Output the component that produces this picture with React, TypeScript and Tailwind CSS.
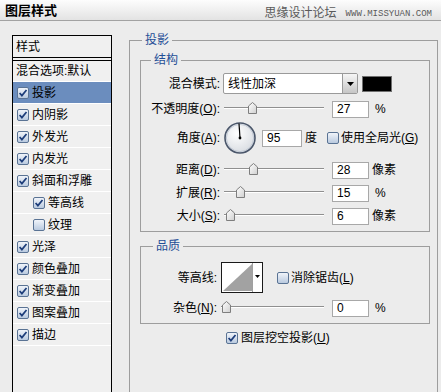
import clsx from "clsx";

const fieldBorder = "border border-[#9d9d9d]";
const legendStyle = "px-[3px] leading-[16px] text-[#1f4e96]";

function CheckBox({ checked }: { checked: boolean }) {
  return (
    <svg width="12" height="12" viewBox="0 0 12 12" className="shrink-0">
      <defs>
        <linearGradient id="cbFill" x1="0" y1="0" x2="0" y2="1">
          <stop offset="0" stopColor="#f3f6fb" />
          <stop offset="1" stopColor="#b7c8de" />
        </linearGradient>
      </defs>
      <rect x="0.5" y="0.5" width="11" height="11" rx="1.5" fill="url(#cbFill)" stroke="#5a7394" />
      {checked && (
        <path d="M2.6 6 L4.9 8.6 L9.5 3" fill="none" stroke="#1d3d7a" strokeWidth="1.7" />
      )}
    </svg>
  );
}

function Slider({ track, thumb }: { track: string; thumb: string }) {
  return (
    <div className={clsx("relative h-[12px] shrink-0 -mt-[3px]", track)}>
      {/* track */}
      <div className="mt-[5px] h-[2px] border-t border-[#8f8f8f] bg-white" />
      {/* thumb */}
      <svg width="9" height="12" viewBox="0 0 9 12" className={clsx("absolute top-0", thumb)}>
        <defs>
          <linearGradient id="thumbFill" x1="0" y1="0" x2="1" y2="1">
            <stop offset="0" stopColor="#ffffff" />
            <stop offset="1" stopColor="#cfcfcf" />
          </linearGradient>
        </defs>
        <path d="M0.5 4 L4.5 0.5 L8.5 4 L8.5 11.5 L0.5 11.5 Z" fill="url(#thumbFill)" stroke="#7e7e7e" />
      </svg>
    </div>
  );
}

function NumBox({ value, width = "w-[37px]" }: { value: string; width?: string }) {
  return (
    <div
      className={clsx(
        "h-[17px] shrink-0 bg-white border border-[#a8a8a8] pl-[4px] flex items-center leading-none",
        width,
      )}
    >
      {value}
    </div>
  );
}

function Key({ text, k }: { text: string; k: string }) {
  return (
    <>
      {text}(<span className="underline">{k}</span>):
    </>
  );
}

const listItems = [
  { label: "内阴影", checked: true },
  { label: "外发光", checked: true },
  { label: "内发光", checked: true },
  { label: "斜面和浮雕", checked: true },
  { label: "等高线", checked: true, sub: true },
  { label: "纹理", checked: false, sub: true },
  { label: "光泽", checked: true },
  { label: "颜色叠加", checked: true },
  { label: "渐变叠加", checked: true },
  { label: "图案叠加", checked: true },
  { label: "描边", checked: true },
];

export default function App() {
  return (
    <div className="w-[441px] h-[392px] overflow-hidden bg-[#ececec] text-[12px] text-black font-['Liberation_Sans','Noto_Sans_CJK_SC',sans-serif]">
      {/* Title bar */}
      <div className="h-[21px] border-b border-[#a2a2a2] bg-gradient-to-b from-[#fdfdfd] to-[#e3e3e3] flex items-end justify-between">
        <div className="pl-[5px] pb-[3px] font-bold text-[13px] leading-[13px]">图层样式</div>
        <div className="flex items-end pr-[9px] text-[#5a5a5a]">
          <span className="text-[12px] leading-[13px]">思缘设计论坛</span>
          <span className="ml-[9px] pb-[1px] text-[9px] leading-[9px] font-['Liberation_Mono',monospace]">
            WWW.MISSYUAN.COM
          </span>
        </div>
      </div>

      <div className="flex items-start">
        {/* Style list */}
        <div className="ml-[12px] mt-[14px] w-[100px] h-[380px] shrink-0 border border-black bg-[#f0f0f0]">
          <div className="h-[25px] border-b-4 border-double border-black pl-[3px] flex items-center">样式</div>
          <div className="h-[21px] border-b border-white pl-[3px] flex items-center">混合选项:默认</div>
          <div className="h-[22px] border-b border-white bg-[#6b8dbe] pl-[4px] flex items-center gap-[3px]">
            <CheckBox checked />
            <span>投影</span>
          </div>
          {listItems.map((item) => (
            <div
              key={item.label}
              className={clsx(
                "h-[22px] border-b border-white flex items-center gap-[3px]",
                item.sub ? "pl-[20px]" : "pl-[4px]",
              )}
            >
              <CheckBox checked={item.checked} />
              <span>{item.label}</span>
            </div>
          ))}
        </div>

        {/* Drop shadow panel */}
        <fieldset className={clsx("ml-[17px] mt-[11px] w-[309px] h-[400px] shrink-0", fieldBorder)}>
          <legend className={clsx("ml-[12px]", legendStyle)}>投影</legend>

          {/* Structure */}
          <fieldset className={clsx("ml-[10px] mt-[4px] w-[290px] pb-[6px]", fieldBorder)}>
            <legend className={clsx("ml-[10px]", legendStyle)}>结构</legend>

            <div className="mt-[5px] h-[21px] flex items-center">
              <div className="w-[79px] text-right">混合模式:</div>
              <div className="ml-[3px] w-[135px] h-[21px] bg-white border border-[#9a9a9a] rounded-[2px] flex items-center overflow-hidden">
                <span className="pl-[4px] flex-1">线性加深</span>
                <div className="w-[15px] h-full border-l border-[#9a9a9a] bg-gradient-to-b from-[#f6f6f6] to-[#c6c6c6] flex items-center justify-center">
                  <svg width="7" height="4" viewBox="0 0 7 4">
                    <path d="M0 0 H7 L3.5 4 Z" fill="#000" />
                  </svg>
                </div>
              </div>
              <div className="ml-[4px] w-[30px] h-[16px] bg-black border border-[#707070]" />
            </div>

            <div className="mt-[6px] h-[18px] flex items-center">
              <div className="w-[79px] text-right">
                <Key text="不透明度" k="O" />
              </div>
              <Slider track="ml-[4px] w-[100px]" thumb="left-[24px]" />
              <div className="ml-[8px]">
                <NumBox value="27" />
              </div>
              <span className="ml-[6px]">%</span>
            </div>

            <div className="mt-[4px] h-[32px] flex items-center">
              <div className="w-[79px] text-right">
                <Key text="角度" k="A" />
              </div>
              <svg width="32" height="32" viewBox="0 0 32 32" className="ml-[4px] shrink-0">
                <defs>
                  <radialGradient id="dialFill" cx="0.4" cy="0.35" r="0.75">
                    <stop offset="0" stopColor="#ffffff" />
                    <stop offset="1" stopColor="#d4d8de" />
                  </radialGradient>
                </defs>
                <circle cx="16" cy="16" r="15" fill="url(#dialFill)" stroke="#4a566a" strokeWidth="1.6" />
                <circle cx="16" cy="16" r="13.6" fill="none" stroke="#b9c2cf" strokeWidth="0.8" />
                <line x1="16" y1="16" x2="15" y2="1.5" stroke="#000" strokeWidth="1.2" />
                <circle cx="16" cy="16" r="1.4" fill="#000" />
              </svg>
              <div className="ml-[6px]">
                <NumBox value="95" width="w-[40px]" />
              </div>
              <span className="ml-[3px]">度</span>
              <div className="ml-[10px] flex items-center gap-[2px]">
                <CheckBox checked={false} />
                <span>
                  使用全局光(<span className="underline">G</span>)
                </span>
              </div>
            </div>

            <div className="mt-[7px] h-[18px] flex items-center">
              <div className="w-[79px] text-right">
                <Key text="距离" k="D" />
              </div>
              <Slider track="ml-[4px] w-[100px]" thumb="left-[25px]" />
              <div className="ml-[8px]">
                <NumBox value="28" />
              </div>
              <span className="ml-[3px]">像素</span>
            </div>

            <div className="mt-[5px] h-[18px] flex items-center">
              <div className="w-[79px] text-right">
                <Key text="扩展" k="R" />
              </div>
              <Slider track="ml-[4px] w-[100px]" thumb="left-[12px]" />
              <div className="ml-[8px]">
                <NumBox value="15" />
              </div>
              <span className="ml-[6px]">%</span>
            </div>

            <div className="mt-[5px] h-[18px] flex items-center">
              <div className="w-[79px] text-right">
                <Key text="大小" k="S" />
              </div>
              <Slider track="ml-[4px] w-[100px]" thumb="left-[2px]" />
              <div className="ml-[8px]">
                <NumBox value="6" />
              </div>
              <span className="ml-[3px]">像素</span>
            </div>
          </fieldset>

          {/* Quality */}
          <fieldset className={clsx("ml-[10px] mt-[6px] w-[290px] pb-[6px]", fieldBorder)}>
            <legend className={clsx("ml-[12px]", legendStyle)}>品质</legend>

            <div className="mt-[8px] h-[31px] flex items-center">
              <div className="w-[76px] text-right">等高线:</div>
              <svg width="42" height="31" viewBox="0 0 42 31" className="ml-[4px] shrink-0">
                <rect x="0.5" y="0.5" width="41" height="30" fill="#fff" stroke="#1a1a1a" />
                <polygon points="2,29 31,2 31,29" fill="#a2a2a2" />
                <line x1="31.5" y1="1" x2="31.5" y2="30" stroke="#a0a0a0" />
                <polygon points="34,13 39,13 36.5,16" fill="#000" />
              </svg>
              <div className="ml-[14px] flex items-center gap-[2px]">
                <CheckBox checked={false} />
                <span>
                  消除锯齿(<span className="underline">L</span>)
                </span>
              </div>
            </div>

            <div className="mt-[6px] h-[18px] flex items-center">
              <div className="w-[76px] text-right">
                <Key text="杂色" k="N" />
              </div>
              <Slider track="ml-[4px] w-[103px]" thumb="left-[1px]" />
              <div className="ml-[8px]">
                <NumBox value="0" />
              </div>
              <span className="ml-[6px]">%</span>
            </div>
          </fieldset>

          <div className="mt-[6px] ml-[96px] h-[16px] flex items-center gap-[3px]">
            <CheckBox checked />
            <span>
              图层挖空投影(<span className="underline">U</span>)
            </span>
          </div>
        </fieldset>
      </div>
    </div>
  );
}
